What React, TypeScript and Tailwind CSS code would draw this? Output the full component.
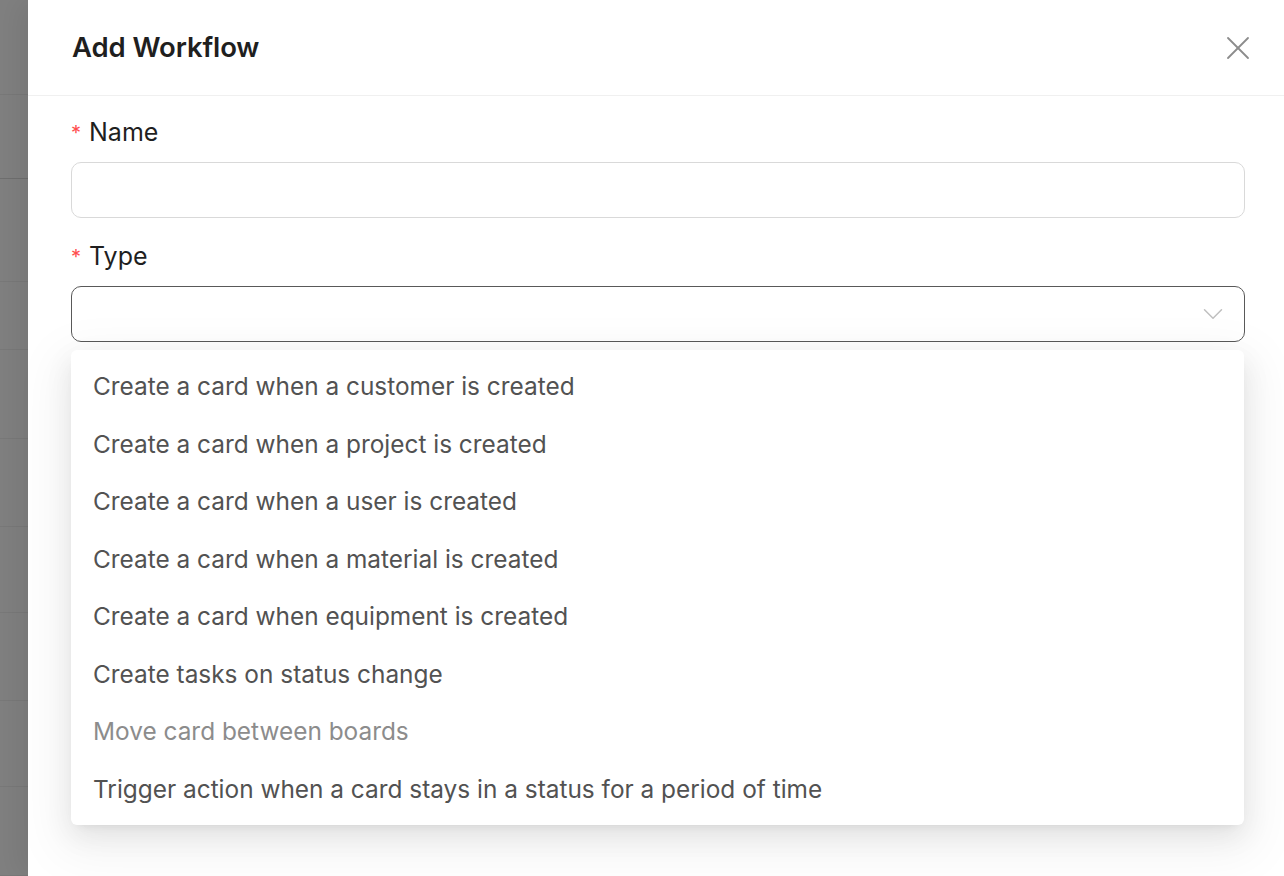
import { X, ChevronDown } from "lucide-react";

const rowHeights = [95, 84, 103, 68, 89, 88, 86, 88, 86, 89];

const options = [
  { label: "Create a card when a customer is created" },
  { label: "Create a card when a project is created" },
  { label: "Create a card when a user is created" },
  { label: "Create a card when a material is created" },
  { label: "Create a card when equipment is created" },
  { label: "Create tasks on status change" },
  { label: "Move card between boards", disabled: true },
  { label: "Trigger action when a card stays in a status for a period of time" },
];

const App = () => {
  return (
    <div
      className="flex h-[876px] w-[1284px] overflow-hidden bg-white"
      style={{ fontFamily: "Inter, 'Noto Sans', sans-serif" }}
    >
      {/* Masked page behind the drawer */}
      <div className="flex w-[28px] shrink-0 flex-col bg-[#808080]">
        {rowHeights.map((h, i) => (
          <div
            key={i}
            className={
              i === 1
                ? "shrink-0 border-b border-[#6f6f6f]"
                : "shrink-0 border-b border-[#797979]"
            }
            style={{ height: h }}
          />
        ))}
      </div>

      {/* Drawer */}
      <div className="relative z-10 flex flex-1 flex-col bg-white shadow-[-10px_0_28px_rgba(0,0,0,0.08)]">
        {/* Header */}
        <div className="flex h-[96px] shrink-0 items-center justify-between border-b border-[#f0f0f0] pl-[44px] pr-[26px]">
          <h1 className="pt-[1px] text-[27.5px] font-semibold tracking-[-0.1px] text-[#1f1f1f]">
            Add Workflow
          </h1>
          <X size={40} strokeWidth={1.1} className="text-[#8c8c8c]" />
        </div>

        {/* Body */}
        <div className="flex flex-col pl-[43px] pr-[39px] pt-[16px]">
          <label className="flex h-[38px] items-center pt-[4px] text-[25px] text-[#1f1f1f]">
            <span className="mr-[8px] text-[20px] text-[#ff4d4f]">*</span>
            Name
          </label>
          <div className="mt-[12px] h-[56px] rounded-[10px] border border-[#d9d9d9] bg-white" />

          <label className="mt-[18px] flex h-[38px] items-center pt-[4px] text-[25px] text-[#1f1f1f]">
            <span className="mr-[8px] text-[20px] text-[#ff4d4f]">*</span>
            Type
          </label>
          <div className="mt-[12px] flex h-[56px] items-center justify-end rounded-[10px] border border-[#595959] bg-white pr-[14px]">
            <ChevronDown size={34} strokeWidth={1.05} className="text-[#bfbfbf]" />
          </div>

          {/* Dropdown */}
          <div className="mt-[8px] mr-[1px] rounded-[6px] bg-white pt-[8px] pb-[7px] shadow-[0_10px_28px_0_rgba(0,0,0,0.08),0_5px_10px_-7px_rgba(0,0,0,0.12),0_16px_49px_14px_rgba(0,0,0,0.05)]">
            {options.map((o, i) => (
              <div
                key={i}
                className={
                  o.disabled
                    ? "flex h-[57.5px] items-center px-[22px] text-[24.4px] text-[#8c8c8c]"
                    : "flex h-[57.5px] items-center px-[22px] text-[24.4px] text-[#525252]"
                }
              >
                {o.label}
              </div>
            ))}
          </div>
        </div>
      </div>
    </div>
  );
};

export default App;
